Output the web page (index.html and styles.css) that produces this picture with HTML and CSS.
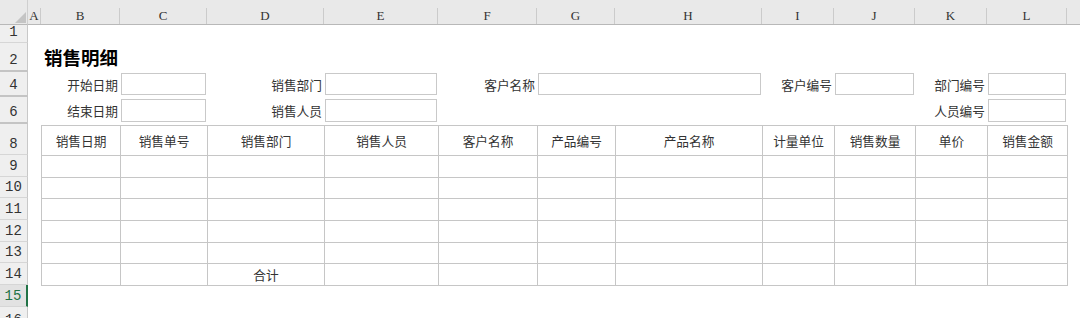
FILE: index.html
```html
<!DOCTYPE html>
<html lang="zh-CN">
<head>
    <meta charset="UTF-8">
    <meta name="viewport" content="width=device-width, initial-scale=1.0">
    <title>销售明细</title>
    <link rel="stylesheet" href="styles.css">
</head>
<body>
    <div class="sheet">
        <!-- column headers -->
        <div class="corner">
            <svg width="28" height="25" viewBox="0 0 28 25"><polygon points="26,12 26,23 15,23" fill="#c4c4c4"/></svg>
        </div>
        <div class="col-head"><span>A</span></div>
        <div class="col-head"><span>B</span></div>
        <div class="col-head"><span>C</span></div>
        <div class="col-head"><span>D</span></div>
        <div class="col-head"><span>E</span></div>
        <div class="col-head"><span>F</span></div>
        <div class="col-head"><span>G</span></div>
        <div class="col-head"><span>H</span></div>
        <div class="col-head"><span>I</span></div>
        <div class="col-head"><span>J</span></div>
        <div class="col-head"><span>K</span></div>
        <div class="col-head"><span>L</span></div>
        <div class="col-head last"><span></span></div>

        <!-- row headers -->
        <div class="row-head r1">1</div>
        <div class="row-head r2 hidden-after">2</div>
        <div class="row-head r3 hidden-after">4</div>
        <div class="row-head r4 hidden-after">6</div>
        <div class="row-head r5">8</div>
        <div class="row-head r6">9</div>
        <div class="row-head r7">10</div>
        <div class="row-head r8">11</div>
        <div class="row-head r9">12</div>
        <div class="row-head r10">13</div>
        <div class="row-head r11">14</div>
        <div class="row-head r12 selected">15</div>
        <div class="row-head r13 cut">16</div>

        <!-- title -->
        <div class="title">销售明细</div>

        <!-- filter row 4 -->
        <div class="lbl row4 cB">开始日期</div>
        <div class="box row4 cC"></div>
        <div class="lbl row4 cD">销售部门</div>
        <div class="box row4 cE"></div>
        <div class="lbl row4 cF">客户名称</div>
        <div class="box row4 cGH"></div>
        <div class="lbl row4 cI">客户编号</div>
        <div class="box row4 cJ"></div>
        <div class="lbl row4 cK">部门编号</div>
        <div class="box row4 cL"></div>

        <!-- filter row 6 -->
        <div class="lbl row6 cB">结束日期</div>
        <div class="box row6 cC"></div>
        <div class="lbl row6 cD">销售人员</div>
        <div class="box row6 cE"></div>
        <div class="lbl row6 cK">人员编号</div>
        <div class="box row6 cL"></div>

        <!-- detail table -->
        <table class="detail">
            <colgroup>
                <col style="width:79px"><col style="width:87px"><col style="width:117px">
                <col style="width:114px"><col style="width:99px"><col style="width:78px">
                <col style="width:147px"><col style="width:72px"><col style="width:81px">
                <col style="width:72px"><col style="width:80px">
            </colgroup>
            <thead>
                <tr>
                    <th>销售日期</th><th>销售单号</th><th>销售部门</th><th>销售人员</th>
                    <th>客户名称</th><th>产品编号</th><th>产品名称</th><th>计量单位</th>
                    <th>销售数量</th><th>单价</th><th>销售金额</th>
                </tr>
            </thead>
            <tbody>
                <tr class="h22"><td></td><td></td><td></td><td></td><td></td><td></td><td></td><td></td><td></td><td></td><td></td></tr>
                <tr class="h21"><td></td><td></td><td></td><td></td><td></td><td></td><td></td><td></td><td></td><td></td><td></td></tr>
                <tr class="h22"><td></td><td></td><td></td><td></td><td></td><td></td><td></td><td></td><td></td><td></td><td></td></tr>
                <tr class="h22"><td></td><td></td><td></td><td></td><td></td><td></td><td></td><td></td><td></td><td></td><td></td></tr>
                <tr class="h21"><td></td><td></td><td></td><td></td><td></td><td></td><td></td><td></td><td></td><td></td><td></td></tr>
                <tr class="h22"><td></td><td></td><td>合计</td><td></td><td></td><td></td><td></td><td></td><td></td><td></td><td></td></tr>
            </tbody>
        </table>
    </div>
</body>
</html>
```

FILE: styles.css
```css
* {
    margin: 0;
    padding: 0;
    box-sizing: border-box;
}
body {
    background: #fff;
    font-family: "Noto Sans CJK SC", sans-serif;
    overflow: hidden;
}
.sheet {
    display: grid;
    width: 1080px;
    height: 318px;
    grid-template-columns: 28px 13px 79px 87px 117px 114px 99px 78px 147px 72px 81px 72px 80px 1fr;
    grid-template-rows: 25px 18px 29px 25px 27px 31px 22px 21px 22px 22px 21px 22px 22px 11px;
}

/* headers */
.corner {
    background: #e9e9e9;
    border-bottom: 1px solid #b8b8b8;
    border-right: 1px solid #cfcfcf;
}
.corner svg {
    display: block;
}
.col-head {
    background: #e9e9e9;
    border-bottom: 1px solid #b8b8b8;
    display: flex;
    align-items: flex-end;
}
.col-head span {
    display: block;
    width: 100%;
    height: 16px;
    border-right: 1px solid #cbcbcb;
    text-align: center;
    font-family: "Liberation Serif", serif;
    font-size: 13px;
    line-height: 15px;
    color: #333;
}
.col-head.last span {
    border-right: none;
}
.row-head {
    grid-column: 1;
    background: #efefef;
    border-right: 1px solid #c8c8c8;
    border-bottom: 1px solid #d6d6d6;
    display: flex;
    align-items: flex-end;
    justify-content: center;
    font-family: "Liberation Mono", monospace;
    font-size: 14px;
    line-height: 19px;
    color: #333;
    overflow: hidden;
}
.row-head.hidden-after {
    border-bottom: 2px solid #c4c4c4;
}
.row-head.selected {
    background: #e2e2e2;
    color: #217346;
    border-right: 2px solid #217346;
}
.row-head.cut {
    align-items: flex-start;
    border-bottom: none;
    padding-top: 4px;
}
.r1 { grid-row: 2; }
.r2 { grid-row: 3; }
.r3 { grid-row: 4; }
.r4 { grid-row: 5; }
.r5 { grid-row: 6; }
.r6 { grid-row: 7; }
.r7 { grid-row: 8; }
.r8 { grid-row: 9; }
.r9 { grid-row: 10; }
.r10 { grid-row: 11; }
.r11 { grid-row: 12; }
.r12 { grid-row: 13; }
.r13 { grid-row: 14; }

/* title */
.title {
    grid-row: 3;
    grid-column: 3 / 6;
    align-self: end;
    padding-left: 3px;
    padding-bottom: 2px;
    font-size: 18.5px;
    font-weight: bold;
    color: #000;
    line-height: 26px;
}

/* filter fields */
.row4 { grid-row: 4; }
.row6 { grid-row: 5; }
.cB { grid-column: 3; }
.cC { grid-column: 4; }
.cD { grid-column: 5; }
.cE { grid-column: 6; }
.cF { grid-column: 7; }
.cGH { grid-column: 8 / 10; }
.cI { grid-column: 10; }
.cJ { grid-column: 11; }
.cK { grid-column: 12; }
.cL { grid-column: 13; }

.lbl {
    display: flex;
    align-items: center;
    justify-content: flex-end;
    padding-right: 2px;
    font-size: 12.7px;
    color: #333;
}
.box {
    margin: 1px 1px 2px 1px;
    border: 1px solid #c9c9c9;
    background: #fff;
}
.row6.box {
    margin: 2px 1px 2px 1px;
}

/* detail table */
.detail {
    grid-row: 6 / 13;
    grid-column: 3 / 14;
    border-collapse: collapse;
    table-layout: fixed;
    width: 1026px;
    height: 160px;
    margin-top: 1px;
}
.detail th,
.detail td {
    border: 1px solid #c6c6c6;
    font-size: 12.7px;
    font-weight: normal;
    color: #333;
    text-align: center;
    vertical-align: middle;
    padding: 0;
}
.detail th {
    height: 30px;
}
.h22 td { height: 22px; }
.h21 td { height: 21px; }
```
